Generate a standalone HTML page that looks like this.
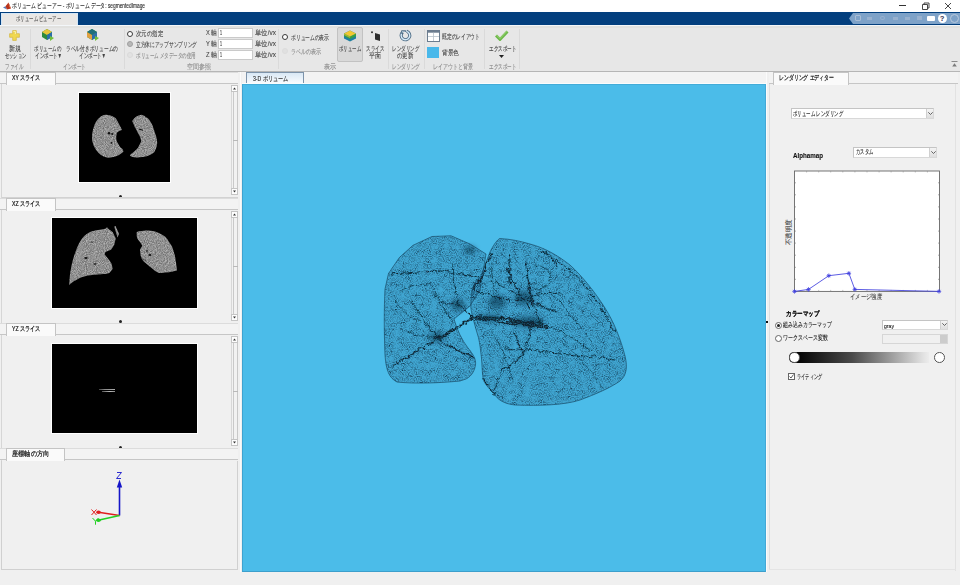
<!DOCTYPE html>
<html><head><meta charset="utf-8">
<style>
*{margin:0;padding:0;box-sizing:border-box}
html,body{width:960px;height:585px;overflow:hidden;background:#f0f0f0;font-family:"Liberation Sans",sans-serif;color:#222}
.a{position:absolute}
.t{position:absolute;font-size:7px;line-height:8px;white-space:nowrap;color:#444;transform-origin:0 0;-webkit-text-stroke:0.1px currentColor}
.g{color:#8a8a8a}
.sep{position:absolute;width:1px;background:#dadada;top:29px;height:40px}
.tab{position:absolute;background:#fafafa;border:1px solid #c4c4c4;border-bottom:none}
.strip{position:absolute;background:#f3f3f3;border-top:1px solid #dcdcdc;border-bottom:1px solid #c6c6c6}
.sb{position:absolute;width:7px;border:1px solid #d0d0d0;background:#f2f2f2}
.dot{position:absolute;width:3px;height:3px;border-radius:50%;background:#222}
.inp{position:absolute;background:#fff;border:1px solid #cacaca}
.rad{position:absolute;width:7px;height:7px;border-radius:50%;border:1px solid #666;background:#fff}
.img{position:absolute;background:#000}
</style></head><body>

<svg width="0" height="0" style="position:absolute"><defs>
<filter id="gspk" x="0" y="0" width="100%" height="100%" color-interpolation-filters="sRGB">
<feTurbulence type="fractalNoise" baseFrequency="1.1" numOctaves="1" seed="3" result="n"/>
<feColorMatrix in="n" type="matrix" values="0.55 0 0 0 0.29  0.55 0 0 0 0.29  0.55 0 0 0 0.29  0 0 0 0 1" result="g"/>
<feComposite in="g" in2="SourceGraphic" operator="in"/>
</filter></defs></svg>
<!-- ===== title bar ===== -->
<div class="a" style="left:0;top:0;width:960px;height:12px;background:#fff"></div>
<svg class="a" style="left:1.5px;top:1px" width="10" height="10" viewBox="0 0 10 10"><path d="M1 6.5L3.5 5.2L5 8.5z" fill="#5a7ab8"/><path d="M3.5 5.2L6.5 1.5L9 7.5L5 8.5z" fill="#b8321a"/><path d="M6.5 1.5L9 7.5L7.2 5.8z" fill="#e07a50"/></svg>
<div class="t" style="left:12px;top:2px;color:#222;--w:133">ボリューム ビューアー - ボリューム データ: segmentedImage</div>
<div class="a" style="left:899px;top:5px;width:7px;height:1px;background:#333"></div>
<svg class="a" style="left:921px;top:2px" width="9" height="8" viewBox="0 0 9 8"><path d="M1.5 2.5h5v5h-5z M3 2.5V1h5v5H6.5" stroke="#333" stroke-width="0.9" fill="none"/></svg>
<svg class="a" style="left:944px;top:2px" width="8" height="8" viewBox="0 0 8 8"><path d="M1 1L7 7M7 1L1 7" stroke="#333" stroke-width="0.9"/></svg>

<!-- ===== ribbon band ===== -->
<div class="a" style="left:0;top:12px;width:960px;height:13px;background:#033f7e"></div>
<div class="a" style="left:1px;top:13px;width:77px;height:12.5px;background:#e9e7e5;border:1px solid #d3e6f6;border-bottom:none"></div>
<div class="t" style="left:16px;top:15px;color:#555;--w:45">ボリューム ビューアー</div>
<div class="a" style="left:849px;top:13px;width:111px;height:11px;background:#7ea2c8;clip-path:polygon(4px 0,100% 0,100% 100%,4px 100%,0 50%)"></div>
<div class="a" style="left:855px;top:15px;width:6px;height:6px;border:1px solid #a8bdd6;border-radius:1px"></div>
<div class="a" style="left:867px;top:17px;width:5px;height:3px;background:#98b1cf"></div>
<div class="a" style="left:880px;top:16px;width:5px;height:4px;border:1px solid #98b1cf;border-radius:50%"></div>
<div class="a" style="left:893px;top:17px;width:5px;height:3px;background:#98b1cf"></div>
<div class="a" style="left:905px;top:17px;width:5px;height:3px;background:#98b1cf"></div>
<div class="a" style="left:917px;top:16px;width:5px;height:4px;background:#98b1cf"></div>
<div class="a" style="left:927px;top:16px;width:8px;height:5px;background:#fff;border-radius:1px"></div>
<div class="a" style="left:938px;top:14px;width:9px;height:9px;background:#fff;border-radius:50%"></div>
<div class="t" style="left:940px;top:15px;font-size:7px;line-height:7px;color:#335;font-weight:bold">?</div>
<div class="a" style="left:950px;top:14px;width:9px;height:9px;border:1px solid #b9c9dc;border-radius:50%"></div>

<!-- ===== toolbar ===== -->
<div class="a" style="left:0;top:25px;width:960px;height:46px;background:#e7e7e7"></div><div class="a" style="left:0;top:25px;width:960px;height:1px;background:#f3f6f9"></div><div class="a" style="left:0;top:26px;width:960px;height:2px;background:#e1e1df"></div>
<div class="a" style="left:0;top:71px;width:960px;height:1px;background:#b6b6b6"></div>

<!-- file group -->
<svg class="a" style="left:9px;top:30px" width="11" height="11" viewBox="0 0 11 11"><path d="M3.7 0.6h3.6v3.1h3.1v3.6H7.3v3.1H3.7V7.3H0.6V3.7h3.1z" fill="#f0d850" stroke="#d2b640" stroke-width="0.7"/><path d="M4.4 1.4h2v2.6" stroke="#fff7c0" stroke-width="0.8" fill="none"/></svg>
<div class="t" style="left:9px;top:45px;--w:12">新規</div>
<div class="t" style="left:5px;top:52px;--w:21">セッション</div>
<div class="t g" style="left:5px;top:63px;--w:18">ファイル</div>
<div class="sep" style="left:30px"></div>

<!-- import group -->
<svg class="a" style="left:40px;top:27px" width="16" height="15" viewBox="0 0 16 15"><path d="M2 5l5-3 5 3v5l-5 3-5-3z" fill="#2b8a3e"/><path d="M2 5l5-3 5 3-5 3z" fill="#e6c53a"/><path d="M7 8v5l5-3V5z" fill="#2c6fa8"/><path d="M10 9l4 2-4 3z" fill="#6fbf3a"/></svg>
<div class="t" style="left:34px;top:45px;--w:27">ボリュームの</div>
<div class="t" style="left:35px;top:52px;--w:27">インポート▼</div>
<svg class="a" style="left:85px;top:27px" width="16" height="15" viewBox="0 0 16 15"><path d="M2 5l5-3 5 3v5l-5 3-5-3z" fill="#2b8a3e"/><path d="M2 5l5-3 5 3-5 3z" fill="#1f6f7a"/><path d="M2 5v5l5 3V8z" fill="#e0a040"/><path d="M7 8v5l5-3V5z" fill="#2c6fa8"/><path d="M10 9l4 2-4 3z" fill="#6fbf3a"/></svg>
<div class="t" style="left:66px;top:45px;--w:52">ラベル付きボリュームの</div>
<div class="t" style="left:79px;top:52px;--w:27">インポート▼</div>
<div class="t g" style="left:63px;top:63px;--w:23">インポート</div>
<div class="sep" style="left:124px"></div>

<!-- spatial referencing -->
<div class="rad" style="left:127px;top:30.5px;width:6px;height:6px;border:1.6px solid #3a3a3a"></div>
<div class="t" style="left:136px;top:29.5px;--w:27">次元の指定</div>
<div class="rad" style="left:127px;top:41px;width:6px;height:6px;border:1px solid #a0a0a0;background:#b8b8b8"></div>
<div class="t" style="left:136px;top:40.5px;--w:61">立方体にアップサンプリング</div>
<div class="rad" style="left:127px;top:51.5px;width:6px;height:6px;border:1px solid #dadada;background:#e2e2e2"></div>
<div class="t g" style="left:136px;top:51.5px;--w:60">ボリューム メタデータの使用</div>
<div class="t" style="left:206px;top:29px;--w:11">X 軸</div>
<div class="t" style="left:206px;top:40px;--w:11">Y 軸</div>
<div class="t" style="left:206px;top:51px;--w:11">Z 軸</div>
<div class="inp" style="left:218px;top:28px;width:35px;height:10px"></div>
<div class="inp" style="left:218px;top:39px;width:35px;height:10px"></div>
<div class="inp" style="left:218px;top:50px;width:35px;height:10px"></div>
<div class="t" style="left:220px;top:29px;color:#222;--w:2">1</div>
<div class="t" style="left:220px;top:40px;color:#222;--w:2">1</div>
<div class="t" style="left:220px;top:51px;color:#222;--w:2">1</div>
<div class="t" style="left:255px;top:29px;--w:21">単位/vx</div>
<div class="t" style="left:255px;top:40px;--w:21">単位/vx</div>
<div class="t" style="left:255px;top:51px;--w:21">単位/vx</div>
<div class="t g" style="left:187px;top:63px;--w:24">空間参照</div>
<div class="sep" style="left:278px"></div>

<!-- display group -->
<div class="rad" style="left:282px;top:34px;width:6px;height:6px;border:1.6px solid #3a3a3a"></div>
<div class="t" style="left:290.5px;top:33.5px;--w:38">ボリュームの表示</div>
<div class="rad" style="left:282px;top:48px;width:6px;height:6px;border:1px solid #dcdcdc;background:#e0e0e0"></div>
<div class="t g" style="left:290.5px;top:48px;--w:30">ラベルの表示</div>
<div class="a" style="left:337px;top:27px;width:26px;height:35px;background:#d9d9d9;border:1px solid #c2c2c2;border-radius:2px"></div>
<svg class="a" style="left:343px;top:29px" width="14" height="14" viewBox="0 0 14 14"><path d="M1 4.5l6-3 6 3v5l-6 3-6-3z" fill="#1f7fa0"/><path d="M1 4.5l6 3 6-3v2.5l-6 3-6-3z" fill="#3aa040"/><path d="M1 4.5l6-3 6 3-6 3z" fill="#f2c830"/><path d="M1 4.5l6 3v1.5l-6-3z" fill="#c8c030" opacity="0.7"/></svg>
<div class="t" style="left:339px;top:45px;--w:22">ボリューム</div>
<svg class="a" style="left:369px;top:29px" width="14" height="13" viewBox="0 0 14 13"><circle cx="3" cy="3.2" r="1" fill="#333"/><path d="M6 4l5 1.5v6.5l-5-1.5z" fill="#2e2e2e"/></svg>
<div class="t" style="left:366px;top:45px;--w:18">スライス</div>
<div class="t" style="left:369px;top:52px;--w:12">平面</div>
<div class="t g" style="left:324px;top:63px;--w:12">表示</div>
<div class="sep" style="left:388px"></div>

<!-- rendering -->
<svg class="a" style="left:399px;top:28px" width="15" height="15" viewBox="0 0 15 15"><path d="M3.6 4.2 A4.3 4.3 0 1 0 7.6 3.3" fill="none" stroke="#4f6d86" stroke-width="3.2"/><path d="M3.6 4.2 A4.3 4.3 0 1 0 7.6 3.3" fill="none" stroke="#d3e9f7" stroke-width="1.4"/><path d="M2.3 2.3h4.6v1.8H4.1v2H2.3z" fill="#4f6d86"/><path d="M3.1 3.1h3v0.4H3.5v1.6h-0.4z" fill="#d3e9f7"/></svg>
<div class="t" style="left:392px;top:45px;--w:27">レンダリング</div>
<div class="t" style="left:397px;top:52px;--w:16">の更新</div>
<div class="t g" style="left:392px;top:63px;--w:28">レンダリング</div>
<div class="sep" style="left:424px"></div>

<!-- layout -->
<svg class="a" style="left:427px;top:29.5px" width="13" height="12" viewBox="0 0 13 12"><rect x="0.5" y="0.5" width="12" height="11" fill="#fff" stroke="#6c7d8f" stroke-width="1"/><rect x="0.5" y="0.5" width="12" height="2.2" fill="#6c7d8f"/><path d="M6.5 2.7V11M1 6.5h11" stroke="#b9c3cc" stroke-width="0.8"/></svg>
<div class="t" style="left:442px;top:33px;--w:38">既定のレイアウト</div>
<div class="a" style="left:427.3px;top:46.9px;width:12px;height:11.5px;background:#49b8ea"></div>
<div class="t" style="left:442px;top:49px;--w:17">背景色</div>
<div class="t g" style="left:433px;top:63px;--w:40">レイアウトと背景</div>
<div class="sep" style="left:484px"></div>

<!-- export -->
<svg class="a" style="left:495px;top:30px" width="14" height="11" viewBox="0 0 14 11"><path d="M1 5.5l4 4 7.5-8" fill="none" stroke="#6cb84a" stroke-width="2.8"/><path d="M1.6 5.2l3.4 3.4 7-7.4" fill="none" stroke="#a6dc7e" stroke-width="0.8"/></svg>
<div class="t" style="left:489px;top:45px;--w:27">エクスポート</div>
<svg class="a" style="left:499px;top:55px" width="5" height="3" viewBox="0 0 5 3"><path d="M0 0h5L2.5 3z" fill="#222"/></svg>
<div class="t g" style="left:489px;top:63px;--w:27">エクスポート</div>
<div class="sep" style="left:519px"></div>

<svg class="a" style="left:951px;top:61px" width="7" height="6" viewBox="0 0 7 6"><path d="M0.5 0.5h6" stroke="#8a8a8a" stroke-width="1"/><path d="M1.2 5.5L3.5 2.2L5.8 5.5z" fill="#7a7a7a"/></svg>


<!-- ===== left panel ===== -->
<div class="a" style="left:0;top:72px;width:241px;height:500px;background:#f0f0f0;border-right:1px solid #fbfbfb"></div>
<div class="a" style="left:1px;top:84px;width:1px;height:486px;background:#d6d6d6"></div>
<!-- XY -->
<div class="strip" style="left:0px;top:72px;width:238px;height:12px"></div>
<div class="tab" style="left:6px;top:72px;width:50px;height:13px"></div>
<div class="t" style="left:12px;top:74px;color:#151515;-webkit-text-stroke:0.22px #151515;--w:28.5">XY スライス</div>
<div class="img" style="left:79.4px;top:92.7px;width:90.3px;height:89.7px;box-shadow:0 0 0 1px #fff"></div>
<svg class="a" style="left:79.5px;top:92.7px" width="91" height="91" viewBox="0 0 91 91">
<path d="M25.8 21.8 C21 22 16 27 13.8 33.9 C12 39 11.8 45 12.2 47 C13 52 15 57 21 62 C25 64.5 28 65 30.6 64.4 C34 64 37 63 39 62 L43.5 58.8 L42.7 56.3 C40 54 39 53 38.7 51.5 C37 49 36 47 36.3 45.1 C36 43 36.5 41 37.1 39.5 C39 38 41 37.5 41.9 37.1 C40.5 34 39.5 32 38.7 30.6 C37 27 36 25.5 35.5 25 C32 22.5 29 21.8 25.8 21.8Z" fill="#8f8f8f" filter="url(#gspk)"/>
<path d="M61.2 21.8 C58 22.5 55 24 54.7 25 C53 26.5 52.5 27.5 52.3 28.2 C53 30 54 32 54.7 33.9 C56 36 57.5 38.5 58 40.3 C60 43 61 46 61.2 48.3 C60 51 59 53 58 54.7 C56 57 54 58.5 53.1 59.6 C51 61 50 62 49.9 62.8 C52 64 54 64.5 56.4 64.4 C60 64.5 63 64.2 66 63.6 C70 62 72 61 74 59.6 C76 56 77 53 77.2 49.9 C77 46 76.5 44 75.6 41.9 C74.5 38 73.5 35 72.4 32.2 C70 27 68 25 66 24.2 C64 22.5 62.5 21.8 61.2 21.8Z" fill="#8f8f8f" filter="url(#gspk)"/>
<g fill="#111"><circle cx="29" cy="40.3" r="1.3"/><circle cx="32.2" cy="41.1" r="1"/><circle cx="31.4" cy="49.9" r="0.9"/><circle cx="28" cy="34" r="0.5"/></g>
<path d="M58.8 36 L63 37.3" stroke="#111" stroke-width="1.2"/>
</svg>
<div class="a" style="left:231px;top:85px;width:7px;height:110px;background:#f2f2f2;border-left:1px solid #d8d8d8;border-right:1px solid #c8c8c8"></div>
<div class="a" style="left:231px;top:85px;width:7px;height:7px;background:#fdfdfd;border:1px solid #c4c4c4"></div>
<svg class="a" style="left:233px;top:87px" width="3" height="3" viewBox="0 0 3 3"><path d="M0 2.5h3L1.5 0.5z" fill="#333"/></svg>
<div class="a" style="left:231px;top:188px;width:7px;height:7px;background:#fdfdfd;border:1px solid #c4c4c4"></div>
<svg class="a" style="left:233px;top:190px" width="3" height="3" viewBox="0 0 3 3"><path d="M0 0.5h3L1.5 2.5z" fill="#333"/></svg>
<div class="a" style="left:233px;top:92px;width:1px;height:96px;background:#c9c9c9"></div>
<div class="a" style="left:233px;top:140px;width:5px;height:1px;background:#b9b9b9"></div>
<div class="dot" style="left:119px;top:195px"></div>
<div class="a" style="left:2px;top:197px;width:236px;height:1px;background:#d2d2d2"></div>
<!-- XZ -->
<div class="strip" style="left:0px;top:198px;width:238px;height:12px"></div>
<div class="tab" style="left:6px;top:198px;width:50px;height:13px"></div>
<div class="t" style="left:12px;top:199.5px;color:#151515;-webkit-text-stroke:0.22px #151515;--w:28.5">XZ スライス</div>
<div class="img" style="left:51.9px;top:218.2px;width:145px;height:89.5px;box-shadow:0 0 0 1px #fff"></div>
<svg class="a" style="left:52px;top:218px" width="146" height="90" viewBox="0 0 146 90">
<path d="M17.3 67 C17.5 60 18 55 18.9 51 C20 44 22 38 23.7 33.3 C26 27 28 23 30.1 20.5 C33 17 36 15 38.1 14.1 C41 13 44 12.5 46.2 12.1 L53.4 10.8 L55 9.2 L56.5 11 L60.6 14 L63.8 20.5 L62.2 26.9 L59 31.7 L53.4 34.1 L52.6 36.5 L57.4 42.2 L59.8 46.2 L60.6 51 L57.4 55 C53 56 50 56.3 46.2 56.6 C40 57 36 57.5 33.3 58.2 C29 59 26 61 23.7 62.2 C21 63.5 19 65 17.3 67Z" fill="#8f8f8f" filter="url(#gspk)"/>
<path d="M62.2 8.4 L63.5 8 L67 15.7 L65.5 19.5 L64.5 16 Z" fill="#8f8f8f" filter="url(#gspk)"/>
<path d="M84.7 14 C88 13 91 12.6 94.4 12.5 C98 12.6 100 12.9 102.4 13.3 C107 15 111 17 113.6 18.9 C116 22 118 25 120 28.5 C121.5 32 122.5 36 123.3 39.8 C124 44 124.5 48 124.9 52.6 C122 53.5 119 54 116.8 54.2 C113 54.7 110 54.9 107.2 55 C105 54 102 52.5 100.8 51 C98 49 95 46 91.1 43 L88.7 38.1 L87.9 31.7 L90.3 27.7 L88 24 C86 22 85 20 84.7 18 Z" fill="#8f8f8f" filter="url(#gspk)"/>
<g fill="#151515"><ellipse cx="34" cy="40" rx="1.8" ry="0.9"/><ellipse cx="43" cy="46" rx="1.5" ry="0.8"/><ellipse cx="95" cy="33" rx="1.2" ry="0.8"/><ellipse cx="98" cy="37" rx="1.4" ry="0.9"/><ellipse cx="40" cy="24" rx="0.8" ry="0.6"/></g>
<path d="M89 40 L94 43" stroke="#444" stroke-width="0.8"/>
</svg>
<div class="a" style="left:231px;top:211px;width:7px;height:110px;background:#f2f2f2;border-left:1px solid #d8d8d8;border-right:1px solid #c8c8c8"></div>
<div class="a" style="left:231px;top:211px;width:7px;height:7px;background:#fdfdfd;border:1px solid #c4c4c4"></div>
<svg class="a" style="left:233px;top:213px" width="3" height="3" viewBox="0 0 3 3"><path d="M0 2.5h3L1.5 0.5z" fill="#333"/></svg>
<div class="a" style="left:231px;top:314px;width:7px;height:7px;background:#fdfdfd;border:1px solid #c4c4c4"></div>
<svg class="a" style="left:233px;top:316px" width="3" height="3" viewBox="0 0 3 3"><path d="M0 0.5h3L1.5 2.5z" fill="#333"/></svg>
<div class="a" style="left:233px;top:218px;width:1px;height:96px;background:#c9c9c9"></div>
<div class="a" style="left:233px;top:266px;width:5px;height:1px;background:#b9b9b9"></div>
<div class="dot" style="left:119px;top:320px"></div>
<div class="a" style="left:2px;top:323px;width:236px;height:1px;background:#d2d2d2"></div>
<!-- YZ -->
<div class="strip" style="left:0px;top:323px;width:238px;height:12px"></div>
<div class="tab" style="left:6px;top:323px;width:50px;height:13px"></div>
<div class="t" style="left:12px;top:325px;color:#151515;-webkit-text-stroke:0.22px #151515;--w:28.5">YZ スライス</div>
<div class="img" style="left:52px;top:343.9px;width:145px;height:89.6px;box-shadow:0 0 0 1px #fff"></div>
<div class="a" style="left:99px;top:389px;width:16px;height:1px;background:linear-gradient(to right,#444,#888 35%,#aaa)"></div>
<div class="a" style="left:102px;top:391px;width:13px;height:1px;background:linear-gradient(to right,#555,#999 40%,#bbb 60%,#888)"></div>
<div class="a" style="left:231px;top:336px;width:7px;height:110px;background:#f2f2f2;border-left:1px solid #d8d8d8;border-right:1px solid #c8c8c8"></div>
<div class="a" style="left:231px;top:336px;width:7px;height:7px;background:#fdfdfd;border:1px solid #c4c4c4"></div>
<svg class="a" style="left:233px;top:338px" width="3" height="3" viewBox="0 0 3 3"><path d="M0 2.5h3L1.5 0.5z" fill="#333"/></svg>
<div class="a" style="left:231px;top:439px;width:7px;height:7px;background:#fdfdfd;border:1px solid #c4c4c4"></div>
<svg class="a" style="left:233px;top:441px" width="3" height="3" viewBox="0 0 3 3"><path d="M0 0.5h3L1.5 2.5z" fill="#333"/></svg>
<div class="a" style="left:233px;top:343px;width:1px;height:96px;background:#c9c9c9"></div>
<div class="a" style="left:233px;top:391px;width:5px;height:1px;background:#b9b9b9"></div>
<div class="dot" style="left:119px;top:446px"></div>
<div class="a" style="left:2px;top:448px;width:236px;height:1px;background:#d2d2d2"></div>
<!-- orientation -->
<div class="strip" style="left:0px;top:448px;width:238px;height:12px"></div>
<div class="tab" style="left:6px;top:448px;width:59px;height:13px"></div>
<div class="t" style="left:12px;top:450px;color:#151515;-webkit-text-stroke:0.22px #151515;--w:37">座標軸の方向</div>
<div class="a" style="left:1px;top:461px;width:237px;height:109px;border:1px solid #d0d0d0;border-top:none"></div>
<svg class="a" style="left:85px;top:468px" width="45" height="60" viewBox="0 0 45 60">
<path d="M34.5 47.5V17" stroke="#1515c8" stroke-width="1.6"/><path d="M31.8 19.5l2.7-8 2.7 8z" fill="#1515c8"/>
<path d="M32 4.5h4.5l-5 6h4.5" stroke="#2a2ad0" stroke-width="1" fill="none"/>
<path d="M34.5 47.5L12 44" stroke="#e01e1e" stroke-width="1.5"/><ellipse cx="13.5" cy="44.2" rx="2.3" ry="1.8" fill="#e01e1e"/>
<path d="M6.5 41.5l5 5.5M11.5 41.5l-5 5.5" stroke="#e01e1e" stroke-width="1"/>
<path d="M34.5 47.5L12 52.5" stroke="#22d022" stroke-width="1.5"/><ellipse cx="13.5" cy="52.3" rx="2.3" ry="1.8" fill="#22d022"/>
<path d="M7.5 50l3 3.2 3-3.2M10.5 53.2v3.5" stroke="#22d022" stroke-width="1" fill="none"/>
</svg>

<!-- ===== center 3D ===== -->
<div class="strip" style="left:242px;top:72px;width:524px;height:12px;border-top:none"></div>
<div class="tab" style="left:246px;top:72px;width:58px;height:12px;background:linear-gradient(#d9e8f5,#fbfdff);border-color:#7d93aa"></div>
<div class="t" style="left:252.5px;top:74.5px;color:#222;--w:35.5;-webkit-text-stroke:0.1px">3-D ボリューム</div>
<div class="a" style="left:242px;top:83px;width:524px;height:1px;background:#fafcfd"></div><div class="a" style="left:241.5px;top:83.8px;width:524.5px;height:488.2px;background:#4bbce9;border-top:1px solid #43acd9;border-left:1px solid #3fa3d0;border-bottom:1px solid #3d9fcc;border-right:1px solid #44a8d6"></div>


<svg class="a" style="left:0;top:0" width="960" height="585" viewBox="0 0 960 585">
<defs>
<filter id="spk" x="0" y="0" width="100%" height="100%" color-interpolation-filters="sRGB">
<feTurbulence type="fractalNoise" baseFrequency="0.85" numOctaves="1" seed="7" result="n"/>
<feTurbulence type="fractalNoise" baseFrequency="0.16" numOctaves="2" seed="3" result="m"/>
<feColorMatrix in="n" type="matrix" values="0 0 0 0 0.03  0 0 0 0 0.14  0 0 0 0 0.22  2.6 0 0 0 -1.05" result="d"/>
<feColorMatrix in="m" type="matrix" values="0 0 0 0 0  0 0 0 0 0  0 0 0 0 0  1.6 0 0 0 -0.3" result="ma"/>
<feComposite in="d" in2="ma" operator="in" result="dm"/>
<feComposite in="dm" in2="SourceGraphic" operator="in"/>
</filter>
<filter id="bl" x="-10%" y="-10%" width="120%" height="120%"><feTurbulence type="turbulence" baseFrequency="0.12" numOctaves="2" seed="11" result="t"/><feDisplacementMap in="SourceGraphic" in2="t" scale="5" xChannelSelector="R" yChannelSelector="G" result="d"/><feTurbulence type="fractalNoise" baseFrequency="0.9" numOctaves="1" seed="5" result="n"/><feColorMatrix in="n" type="matrix" values="0 0 0 0 0  0 0 0 0 0  0 0 0 0 0  0 0 0 2.6 -0.5" result="na"/><feComposite in="d" in2="na" operator="in" result="dd"/><feGaussianBlur in="dd" stdDeviation="0.35"/></filter>
<filter id="bl2" x="-50%" y="-50%" width="200%" height="200%"><feGaussianBlur stdDeviation="2.5"/></filter>
<path id="LL" d="M385 289 L388.5 273.5 L399.4 257.5 L413 245.3 L432 236.5 L451 235.8 L470 244 L486 254 L480 290 L470 306 L454 319 C457 330 462 340 468 348 C473 354 476 359 475.6 364 C475 370 472 376 466 379 L460 381 C440 383 415 384 397 382 C389 378 386 370 385 355 C384 330 384 310 385 289Z"/>
<path id="RL" d="M499.6 238.5 C510 239 520 241 530 244 C545 248 557 255 570 265 C582 276 595 292 605 308 C614 322 621 340 625 356 C628 368 626 376 620 381 C610 388 596 394 580 400 C565 405 540 406 515 405 C505 404 497 400 494 393 C488 388 484 383 483 377.8 C482 370 482 365 481.6 359 C480.5 350 480 344 478.5 337.8 C476.5 331 475 326 474 322 C472 315 471 310 470.8 307 C470.8 300 471.5 294 472.4 288.5 C475 282 478 278 480.6 276.5 C484 268 487 260 490 252 C493 246 496 241 499.6 238.5Z"/>
</defs>
<use href="#LL" fill="#1a5a80" fill-opacity="0.22"/>
<use href="#RL" fill="#1a5a80" fill-opacity="0.22"/>
<use href="#LL" fill="#000" filter="url(#spk)"/>
<use href="#RL" fill="#000" filter="url(#spk)"/>
<use href="#LL" fill="none" stroke="#123c56" stroke-opacity="0.6" stroke-width="1"/>
<use href="#RL" fill="none" stroke="#123c56" stroke-opacity="0.6" stroke-width="1"/>
<g fill="#0a2535" fill-opacity="0.5" filter="url(#bl2)">
<ellipse cx="528" cy="322" rx="16" ry="6"/>
<ellipse cx="437" cy="337" rx="8" ry="5"/>
<ellipse cx="458" cy="305" rx="7" ry="6"/>
<ellipse cx="524" cy="298" rx="10" ry="7"/>
<ellipse cx="497" cy="302" rx="9" ry="7"/>
<ellipse cx="490" cy="318" rx="12" ry="4"/>
<ellipse cx="470" cy="250" rx="6" ry="4"/>
</g>
<g stroke="#08202e" fill="none" stroke-linecap="round" filter="url(#bl)">
<path d="M490 252 C486 262 482 272 480.6 276.5 C477 280 474 284 472.4 288.5" stroke-width="2"/>
<path d="M437 337 C445 333 455 326 472 316 C490 314 510 318 546 325" stroke-width="2.6"/>
<path d="M512 320 C525 324 535 326 545 326" stroke-width="4.5"/>
<path d="M437 337 C425 345 405 355 392 365.5" stroke-width="1.6"/>
<path d="M437 337 C442 342 446 345 451 347 C458 350 465 353 472 356" stroke-width="1.6"/>
<path d="M389 273 C405 272 425 270 442 270 C455 272 468 274 478 276" stroke-width="1.2"/>
<path d="M506 267 C512 280 520 295 528 307" stroke-width="1.5"/>
<path d="M524 261 C527 275 529 290 531 304" stroke-width="1.3"/>
<path d="M512 332 C516 340 520 347 522 353 C515 360 507 366 500 372" stroke-width="1.3"/>
<path d="M503 347 C540 350 580 354 614 359" stroke-width="1"/>
<path d="M481.6 377.8 C485 384 489 389 494 393" stroke-width="1.4"/>
<path d="M540 250 C565 262 590 285 614 330" stroke-width="1"/>
<path d="M457 304 C463 310 468 313 472 316" stroke-width="1.6"/>
<path d="M440 300 C448 302 452 303 457 304" stroke-width="1"/>
<path d="M548 290 C560 300 575 320 590 340" stroke-width="0.8"/>
<path d="M410 300 C420 315 430 328 437 337" stroke-width="0.9"/>
<path d="M475 290 C490 295 505 300 524 298" stroke-width="1.2"/>
<path d="M524 298 C535 292 548 290 560 292" stroke-width="1"/>
<path d="M495 300 C490 280 488 268 492 258" stroke-width="0.9"/>
<path d="M457 304 C455 290 450 278 452 262" stroke-width="0.9"/>
<path d="M420 320 C428 325 432 330 437 337" stroke-width="0.8"/>
<path d="M500 372 C495 380 492 388 494 393" stroke-width="0.8"/>
<path d="M546 325 C560 330 575 338 590 350" stroke-width="0.9"/>
<path d="M530 326 C528 340 522 350 522 353" stroke-width="1"/>
<path d="M400 290 C410 285 420 282 430 284" stroke-width="0.7"/>
<path d="M540 250 C548 252 553 258 555 265" stroke-width="1"/>
<path d="M507.6 253.8 C508 265 509 275 509.5 284" stroke-width="1.3"/>
<path d="M524.5 259.4 C526 270 526.4 282 526.4 282 C530 300 536 312 541.4 325.2" stroke-width="1.2"/>
<path d="M470 315.8 C485 318 500 321 513 323.3" stroke-width="2.2"/>
<path d="M526.4 299 C535 303 545 307 554.6 310" stroke-width="1.2"/>
<path d="M517 295 C510 290 502 285 494.4 280" stroke-width="1"/>
<path d="M534 265 C540 262 548 266 550 275 C548 285 540 290 532 288" stroke-width="0.8"/>
<path d="M430 284 C436 295 444 310 452 322" stroke-width="0.8"/>
<path d="M405 330 C415 335 425 336 437 337" stroke-width="0.8"/>
<path d="M395 300 C400 310 410 318 420 320" stroke-width="0.6"/>
<path d="M560 340 C575 352 590 370 600 385" stroke-width="0.6"/>
<path d="M490 330 C500 345 505 360 512 380" stroke-width="0.7"/>
</g>
</svg>

<!-- ===== right panel ===== -->
<div class="a" style="left:766px;top:72px;width:192px;height:500px;background:#f0f0f0;border-left:1.5px solid #fbfbfb"></div><div class="a" style="left:768.5px;top:72px;width:1px;height:498px;background:#dedede"></div>
<div class="strip" style="left:769px;top:72px;width:189px;height:12px;border-top:none"></div>
<div class="a" style="left:955px;top:84px;width:1px;height:487px;background:#e2e2e2"></div>
<div class="a" style="left:769px;top:569px;width:187px;height:1px;background:#e4e4e4"></div>
<div class="tab" style="left:773px;top:72px;width:76px;height:13px"></div>
<div class="t" style="left:779px;top:74px;color:#151515;-webkit-text-stroke:0.22px #151515;--w:55">レンダリング エディター</div>
<div class="inp" style="left:791px;top:108px;width:143px;height:11px;border-color:#c4c4c4 #d8d8d8 #d8d8d8 #c4c4c4"></div><div class="a" style="left:926px;top:109px;width:7px;height:9px;background:linear-gradient(#f4f4f4,#dedede);border-left:1px solid #d0d0d0"></div><svg class="a" style="left:927.5px;top:112.0px" width="5" height="3" viewBox="0 0 5 3"><path d="M0.3 0.3L2.5 2.5L4.7 0.3" stroke="#555" stroke-width="0.9" fill="none"/></svg>
<div class="t" style="left:793px;top:110px;color:#222;--w:50">ボリューム レンダリング</div>

<div class="t" style="left:793px;top:152px;color:#111;font-weight:bold;--w:30">Alphamap</div>
<div class="inp" style="left:853px;top:147px;width:84px;height:10.5px;border-color:#c4c4c4 #d8d8d8 #d8d8d8 #c4c4c4"></div><div class="a" style="left:929px;top:148px;width:7px;height:8.5px;background:linear-gradient(#f4f4f4,#dedede);border-left:1px solid #d0d0d0"></div><svg class="a" style="left:930.5px;top:150.75px" width="5" height="3" viewBox="0 0 5 3"><path d="M0.3 0.3L2.5 2.5L4.7 0.3" stroke="#555" stroke-width="0.9" fill="none"/></svg>
<div class="t" style="left:856px;top:148px;color:#222;--w:17">カスタム</div>

<svg class="a" style="left:780px;top:168px" width="165" height="136" viewBox="0 0 165 136">
<rect x="14.5" y="3" width="145" height="120.4" fill="#fff" stroke="#666" stroke-width="0.9"/>
<path d="M14.5 111.3h1.5M159.5 111.3h-1.5" stroke="#777" stroke-width="0.6"/><path d="M14.5 99.3h1.5M159.5 99.3h-1.5" stroke="#777" stroke-width="0.6"/><path d="M14.5 87.2h1.5M159.5 87.2h-1.5" stroke="#777" stroke-width="0.6"/><path d="M14.5 75.1h1.5M159.5 75.1h-1.5" stroke="#777" stroke-width="0.6"/><path d="M14.5 63.1h1.5M159.5 63.1h-1.5" stroke="#777" stroke-width="0.6"/><path d="M14.5 51.0h1.5M159.5 51.0h-1.5" stroke="#777" stroke-width="0.6"/><path d="M14.5 38.9h1.5M159.5 38.9h-1.5" stroke="#777" stroke-width="0.6"/><path d="M14.5 26.8h1.5M159.5 26.8h-1.5" stroke="#777" stroke-width="0.6"/><path d="M14.5 14.8h1.5M159.5 14.8h-1.5" stroke="#777" stroke-width="0.6"/><path d="M26.6 3v1.5M26.6 123.4v-1.5" stroke="#888" stroke-width="0.5"/><path d="M38.7 3v1.5M38.7 123.4v-1.5" stroke="#888" stroke-width="0.5"/><path d="M50.7 3v1.5M50.7 123.4v-1.5" stroke="#888" stroke-width="0.5"/><path d="M62.8 3v1.5M62.8 123.4v-1.5" stroke="#888" stroke-width="0.5"/><path d="M74.9 3v1.5M74.9 123.4v-1.5" stroke="#888" stroke-width="0.5"/><path d="M87.0 3v1.5M87.0 123.4v-1.5" stroke="#888" stroke-width="0.5"/><path d="M99.1 3v1.5M99.1 123.4v-1.5" stroke="#888" stroke-width="0.5"/><path d="M111.1 3v1.5M111.1 123.4v-1.5" stroke="#888" stroke-width="0.5"/><path d="M123.2 3v1.5M123.2 123.4v-1.5" stroke="#888" stroke-width="0.5"/><path d="M135.3 3v1.5M135.3 123.4v-1.5" stroke="#888" stroke-width="0.5"/><path d="M147.4 3v1.5M147.4 123.4v-1.5" stroke="#888" stroke-width="0.5"/>
<path d="M14.5 123.4 L28.5 121.4 L48.8 107.7 L68.9 105.3 L74.8 121.4 L159 123.4" stroke="#4a4ae0" stroke-width="0.9" fill="none"/>
<path d="M12.3 123.4h4.4M14.5 121.2v4.4M13.0 121.9l3 3M16.0 121.9l-3 3" stroke="#4040e0" stroke-width="0.8"/><path d="M26.3 121.4h4.4M28.5 119.2v4.4M27.0 119.9l3 3M30.0 119.9l-3 3" stroke="#4040e0" stroke-width="0.8"/><path d="M46.599999999999994 107.7h4.4M48.8 105.5v4.4M47.3 106.2l3 3M50.3 106.2l-3 3" stroke="#4040e0" stroke-width="0.8"/><path d="M66.7 105.3h4.4M68.9 103.1v4.4M67.4 103.8l3 3M70.4 103.8l-3 3" stroke="#4040e0" stroke-width="0.8"/><path d="M72.6 121.4h4.4M74.8 119.2v4.4M73.3 119.9l3 3M76.3 119.9l-3 3" stroke="#4040e0" stroke-width="0.8"/><path d="M156.8 123.4h4.4M159 121.2v4.4M157.5 121.9l3 3M160.5 121.9l-3 3" stroke="#4040e0" stroke-width="0.8"/>
</svg>
<div class="t" style="left:784.5px;top:245px;--w:26;--r:1">不透明度</div>
<div class="t" style="left:850px;top:293px;--w:32">イメージ強度</div>
<div class="t" style="left:786px;top:310px;color:#111;font-weight:bold;--w:33">カラーマップ</div>
<div class="rad" style="left:775px;top:322px"></div><div class="a" style="left:777px;top:324px;width:3px;height:3px;border-radius:50%;background:#222"></div>
<div class="t" style="left:783px;top:321px;color:#222;--w:49">組み込みカラーマップ</div>
<div class="rad" style="left:775px;top:335px"></div>
<div class="t" style="left:783px;top:334px;color:#222;--w:45">ワークスペース変数</div>
<div class="inp" style="left:882px;top:320px;width:66px;height:9.5px;border-color:#c4c4c4 #d8d8d8 #d8d8d8 #c4c4c4"></div><div class="a" style="left:940px;top:321px;width:7px;height:7.5px;background:linear-gradient(#f4f4f4,#dedede);border-left:1px solid #d0d0d0"></div><svg class="a" style="left:941.5px;top:323.25px" width="5" height="3" viewBox="0 0 5 3"><path d="M0.3 0.3L2.5 2.5L4.7 0.3" stroke="#555" stroke-width="0.9" fill="none"/></svg>
<div class="t" style="left:884px;top:322px;color:#222;font-size:6px;--w:10">gray</div>

<div class="a" style="left:882px;top:334px;width:66px;height:10px;background:#f0f0f0;border:1px solid #d6d6d6"></div>
<div class="a" style="left:940px;top:335px;width:7px;height:8px;background:#ccc"></div>
<div class="a" style="left:789px;top:352.4px;width:140px;height:10.3px;border-radius:5px 0 0 5px;background:linear-gradient(to right,#000 0%,#080808 8%,#4a4a4a 45%,#9a9a9a 72%,#e2e2e2 96%,#ececec 100%)"></div>
<div class="a" style="left:789.2px;top:352.4px;width:10.5px;height:10.5px;border-radius:50%;background:#fff;border:1px solid #555"></div>
<div class="a" style="left:934.2px;top:352.2px;width:10.8px;height:10.8px;border-radius:50%;background:#fff;border:1px solid #555"></div>
<div class="a" style="left:788px;top:373px;width:7px;height:7px;border:1px solid #666;background:#fff"></div>
<svg class="a" style="left:789px;top:374px" width="5" height="5" viewBox="0 0 5 5"><path d="M0.5 2.5l1.5 1.5 2.5-3.5" stroke="#333" stroke-width="0.8" fill="none"/></svg>
<div class="t" style="left:797px;top:373px;color:#222;--w:25">ライティング</div>
<div class="a" style="left:766px;top:321px;width:2px;height:2px;background:#111"></div>

<!-- ===== status bar bottom ===== -->
<div class="a" style="left:0;top:572px;width:960px;height:13px;background:#f0f0f0"></div>

</body>
<script>
document.querySelectorAll('.t').forEach(function(e){
  var w=parseFloat(getComputedStyle(e).getPropertyValue('--w'));
  if(!w)return;
  var r=e.getBoundingClientRect().width;
  var rot=getComputedStyle(e).getPropertyValue('--r').trim();
  if(r>0)e.style.transform=(rot?'rotate(-90deg) ':'')+'scaleX('+(w/r)+')';
});
</script>
</html>
